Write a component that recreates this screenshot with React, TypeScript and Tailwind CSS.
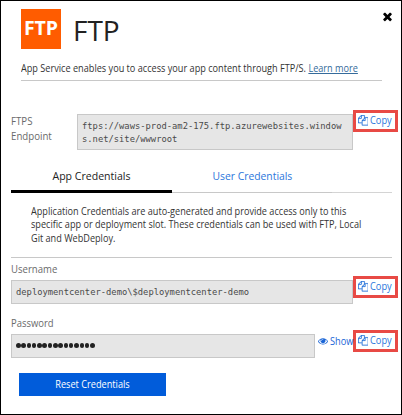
import type { ReactNode } from "react";

function CloseIcon() {
  return (
    <svg viewBox="0 0 1792 1792" className="block h-[13px] w-[13px]" fill="currentColor">
      <path d="M1490 1322q0 40-28 68l-136 136q-28 28-68 28t-68-28l-294-294-294 294q-28 28-68 28t-68-28l-136-136q-28-28-28-68t28-68l294-294-294-294q-28-28-28-68t28-68l136-136q28-28 68-28t68 28l294 294 294-294q28-28 68-28t68 28l136 136q28 28 28 68t-28 68l-294 294 294 294q28 28 28 68z" />
    </svg>
  );
}

function CopyIcon() {
  return (
    <svg viewBox="0 0 1792 1792" className="block h-[10.5px] w-[10.5px] shrink-0" fill="currentColor" stroke="currentColor" strokeWidth="25">
      <path d="M1696 384q40 0 68 28t28 68v1216q0 40-28 68t-68 28h-960q-40 0-68-28t-28-68v-288h-544q-40 0-68-28t-28-68v-672q0-40 20-88t48-76l408-408q28-28 76-48t88-20h416q40 0 68 28t28 68v328q68-40 128-40h416zm-544 213l-299 299h299v-299zm-640-384l-299 299h299v-299zm196 647l316-316v-416h-384v416q0 40-28 68t-68 28h-416v640h512v-256q0-40 20-88t48-76zm956 804v-1152h-384v416q0 40-28 68t-68 28h-416v640h896z" />
    </svg>
  );
}

function EyeIcon() {
  return (
    <svg viewBox="0 0 1792 1792" className="block h-[10px] w-[10px] shrink-0" fill="currentColor">
      <path d="M1664 960q-152-236-381-353 61 104 61 225 0 185-131.5 316.5t-316.5 131.5-316.5-131.5-131.5-316.5q0-121 61-225-229 117-381 353 133 205 333.5 326.5t434.5 121.5 434.5-121.5 333.5-326.5zm-720-384q0-20-14-34t-34-14q-125 0-214.5 89.5t-89.5 214.5q0 20 14 34t34 14 34-14 14-34q0-86 61-147t147-61q20 0 34-14t14-34zm848 384q0 34-20 69-140 230-376.5 368.5t-499.5 138.5-499.5-139-376.5-368q-20-35-20-69t20-69q140-229 376.5-368t499.5-139 499.5 139 376.5 368q20 35 20 69z" />
    </svg>
  );
}

function CopyButton() {
  return (
    <button className="-mt-1 flex h-[22px] w-[45px] shrink-0 items-center gap-[2px] border-3 border-[#e84a45] pb-px pl-[1.5px] text-[10.5px] leading-none text-[#2b76dc]">
      <CopyIcon />
      <span className="origin-left scale-x-[0.88]">Copy</span>
    </button>
  );
}

function Field({ className, children }: { className: string; children: ReactNode }) {
  return (
    <div
      className={`shrink-0 border border-[#c8c8c8] bg-[#e6e6e6] pl-1 font-['DejaVu_Sans_Mono',monospace] text-[8.8px] text-[#4a4a4a] ${className}`}
    >
      {children}
    </div>
  );
}

export default function App() {
  return (
    <div className="flex h-[415px] w-[402px] flex-col overflow-hidden border border-black bg-white pl-[10px] font-['Open_Sans',sans-serif] text-[#333]">
      <header className="flex h-[48px] shrink-0 pt-2 pl-[10px]">
        <div className="flex h-10 w-10 justify-center bg-[#ff5c00] text-[19.5px] leading-[37px] font-bold tracking-[-0.1px] text-white">
          FTP
        </div>
        <h1 className="ml-[12px] text-[28px] leading-[43px] font-medium text-[#222]">FTP</h1>
        <button className="mt-[1px] ml-auto mr-[7px] h-[13px] text-black">
          <CloseIcon />
        </button>
      </header>

      <p className="ml-[10px] h-[32px] w-[361px] shrink-0 border-b border-[#c8c8c8] pt-[12px] text-[10px] leading-[15px] whitespace-nowrap">
        <span className="block origin-left scale-x-[0.914]">
          App Service enables you to access your app content through FTP/S.{" "}
          <a className="text-[#356b9b] underline">Learn more</a>
        </span>
      </p>

      <section className="mt-[33px] flex h-[36px] shrink-0">
        <div className="w-[66px] origin-left scale-x-[0.94] text-[10.3px] leading-[14.5px] text-[#6a6a6a]">
          FTPS
          <br />
          Endpoint
        </div>
        <Field className="h-[36px] w-[276px] pt-[5px] leading-[13.3px]">
          ftps://waws-prod-am2-175.ftp.azurewebsites.window
          <br />
          s.net/site/wwwroot
        </Field>
        <CopyButton />
      </section>

      <nav className="mt-[18px] flex h-[25px] w-[381px] shrink-0 text-center text-[11.5px] leading-4">
        <button className="flex w-[161px] items-start justify-center border-b-3 border-black text-[#222]">
          <span className="scale-x-[0.918]">App Credentials</span>
        </button>
        <button className="flex w-[160px] items-start justify-center border-b border-[#c8c8c8] text-[#2b76dc]">
          <span className="scale-x-[0.9]">User Credentials</span>
        </button>
        <span className="flex-1 border-b border-[#d4d4d4]" />
      </nav>

      <p className="mt-[12px] h-[53px] w-[381px] shrink-0 border-b border-[#c8c8c8] pl-5 text-[10px] leading-[13.3px] whitespace-nowrap">
        <span className="block origin-left scale-x-[0.912]">
          Application Credentials are auto-generated and provide access only to this
          <br />
          specific app or deployment slot. These credentials can be used with FTP, Local
          <br />
          Git and WebDeploy.
        </span>
      </p>

      <label className="mt-[3px] h-[19px] shrink-0 origin-left scale-x-[0.93] text-[10.3px] leading-4 text-[#6a6a6a]">
        Username
      </label>
      <div className="flex h-6 shrink-0">
        <Field className="h-6 w-[342px] leading-[23px]">deploymentcenter-demo\$deploymentcenter-demo</Field>
        <CopyButton />
      </div>

      <label className="mt-[11px] h-[19px] shrink-0 origin-left scale-x-[0.918] text-[10.3px] leading-4 text-[#6a6a6a]">
        Password
      </label>
      <div className="flex h-6 shrink-0">
        <Field className="flex h-6 w-[304px] items-center gap-[0.8px] pb-px">
          {Array.from({ length: 15 }, (_, i) => (
            <span key={i} className="h-[5px] w-[4.5px] rounded-full bg-[#222]" />
          ))}
        </Field>
        <div className="flex h-[14px] w-[38px] items-center gap-[2px] pl-[3px] text-[10.5px] leading-none text-[#1a65d6]">
          <EyeIcon />
          <span className="origin-left scale-x-[0.88]">Show</span>
        </div>
        <CopyButton />
      </div>

      <button className="mt-[15px] ml-2 h-[23px] w-[147px] shrink-0 bg-[#015cda] text-[10px] leading-[23px] font-medium text-white">
        <span className="block scale-x-[0.918]">Reset Credentials</span>
      </button>
    </div>
  );
}
